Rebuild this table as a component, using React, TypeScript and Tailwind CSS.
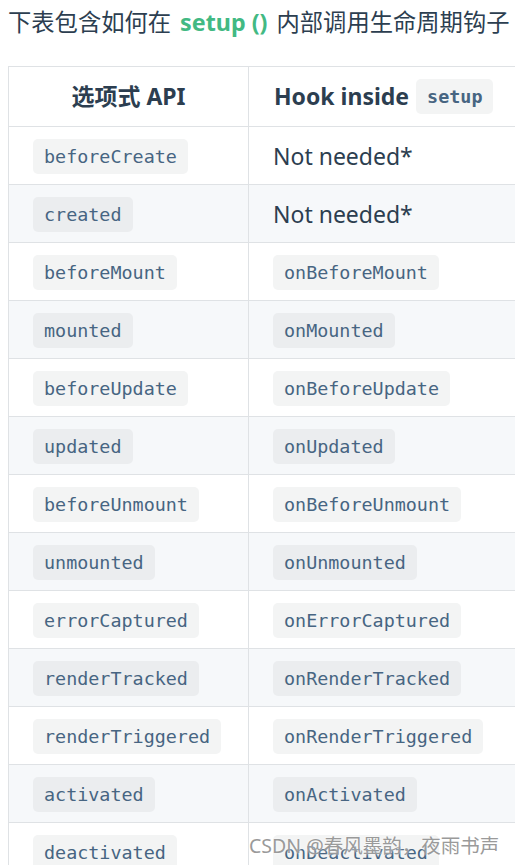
const rows: [string, string | null][] = [
  ["beforeCreate", null],
  ["created", null],
  ["beforeMount", "onBeforeMount"],
  ["mounted", "onMounted"],
  ["beforeUpdate", "onBeforeUpdate"],
  ["updated", "onUpdated"],
  ["beforeUnmount", "onBeforeUnmount"],
  ["unmounted", "onUnmounted"],
  ["errorCaptured", "onErrorCaptured"],
  ["renderTracked", "onRenderTracked"],
  ["renderTriggered", "onRenderTriggered"],
  ["activated", "onActivated"],
  ["deactivated", "onDeactivated"],
];

const sans = "font-['Noto_Sans','Noto_Sans_CJK_SC',sans-serif]";

const Code = ({ children, dark }: { children: string; dark?: boolean }) => (
  <code
    className={`inline-block h-[35px] rounded-[5px] px-[11px] font-['DejaVu_Sans_Mono',monospace] text-[18.4px] leading-[36px] text-[#476582] ${
      dark ? "bg-[#ebedef]" : "bg-[#f3f4f4]"
    }`}
  >
    {children}
  </code>
);

export default function App() {
  return (
    <div className={`h-[865px] w-[515px] overflow-hidden bg-white pl-2 text-[#2c3e50] ${sans}`}>
      {/* intro line */}
      <p className="whitespace-nowrap text-[23.3px] leading-[44px] text-[#2c3e50]">
        下表包含如何在<span className="px-[9px] font-bold text-[#42b983]">setup ()</span>内部调用生命周期钩子
      </p>

      {/* lifecycle table */}
      <div className="relative mt-[22px] w-[560px] border-t border-l border-[#dfe2e5]">
        <div className="grid grid-cols-[240px_320px] border-b border-[#dfe2e5]">
          <div className="flex h-[59px] items-center justify-center border-r border-[#dfe2e5] text-[23px] font-bold">
            选项式 API
          </div>
          <div className="flex h-[59px] items-center gap-[7px] pl-[25px] text-[23px] font-bold">
            Hook inside <Code>setup</Code>
          </div>
        </div>

        {rows.map(([opt, hook], i) => {
          const striped = i % 2 === 1;
          return (
            <div
              key={opt}
              className={`grid grid-cols-[240px_320px] border-b border-[#dfe2e5] ${striped ? "bg-[#f6f8fa]" : "bg-white"}`}
            >
              <div className="flex h-[57px] items-center border-r border-[#dfe2e5] pl-6 pt-[2px]">
                <Code dark={striped}>{opt}</Code>
              </div>
              <div className="flex h-[57px] items-center pl-6 pt-[2px]">
                {hook ? <Code dark={striped}>{hook}</Code> : <span className="text-[23px]">Not needed*</span>}
              </div>
            </div>
          );
        })}

        {/* watermark */}
        <div className="absolute left-[240px] top-[764px] whitespace-nowrap text-[19.5px] text-[#9a9a9a] [text-shadow:0_0_3px_#fff]">
          CSDN @春风墨韵，夜雨书声
        </div>
      </div>
    </div>
  );
}
